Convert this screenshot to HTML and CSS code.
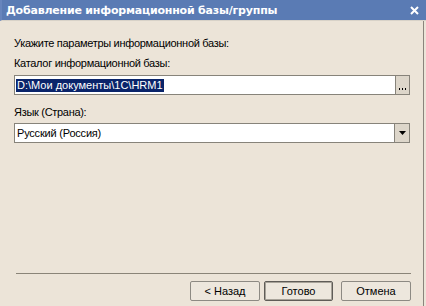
FILE: index.html
```html
<!DOCTYPE html>
<html lang="ru">
<head>
    <meta charset="UTF-8">
    <title>Добавление информационной базы/группы</title>
    <link rel="stylesheet" href="styles.css">
</head>
<body>
<div class="window">
    <div class="titlebar">
        <span class="title">Добавление информационной базы/группы</span>
        <svg class="close" width="9" height="9" viewBox="0 0 9 9">
            <path d="M1 1 L8 8 M8 1 L1 8" stroke="#fff" stroke-width="2" fill="none"/>
        </svg>
    </div>

    <div class="content">
        <div class="label first">Укажите параметры информационной базы:</div>

        <div class="label">Каталог информационной базы:</div>
        <div class="field path-field">
            <div class="field-value"><span class="selected">D:\Мои документы\1С\HRM1</span></div>
            <div class="field-btn">
                <svg width="7" height="2" viewBox="0 0 7 2">
                    <rect x="0" y="0" width="1" height="2" fill="#000"/>
                    <rect x="3" y="0" width="1" height="2" fill="#000"/>
                    <rect x="6" y="0" width="1" height="2" fill="#000"/>
                </svg>
            </div>
        </div>

        <div class="label lang-label">Язык (Страна):</div>
        <div class="field select-field">
            <div class="field-value">Русский (Россия)</div>
            <div class="field-btn">
                <svg width="7" height="4" viewBox="0 0 7 4">
                    <path d="M0 0 H7 L3.5 4 Z" fill="#000"/>
                </svg>
            </div>
        </div>

        <div class="spacer"></div>

        <div class="separator"></div>

        <div class="buttons">
            <div class="button">&lt; Назад</div>
            <div class="button default">Готово</div>
            <div class="button cancel">Отмена</div>
        </div>
    </div>
</div>
</body>
</html>
```

FILE: styles.css
```css
body {
    margin: 0;
    padding: 0;
    font-family: 'Liberation Sans', Arial, sans-serif;
    font-size: 11px;
    color: #000;
    background: #ece4d8;
}

.window {
    width: 426px;
    height: 306px;
    display: flex;
    flex-direction: column;
    background: #ece4d8;
    box-sizing: border-box;
    overflow: hidden;
}

.titlebar {
    height: 20px;
    flex: none;
    display: flex;
    align-items: center;
    justify-content: space-between;
    padding: 0 6px 0 6px;
    background: #5a7bb4;
    border-left: 2px solid #6785bd;
    border-bottom: 1px solid #d8d2c8;
    box-sizing: content-box;
}

.title {
    color: #fff;
    font-family: 'DejaVu Sans', Verdana, sans-serif;
    font-weight: bold;
    font-size: 11px;
    letter-spacing: -0.2px;
    margin-left: -2px;
}

.close {
    margin-right: 1px;
}

.content {
    flex: 1;
    display: flex;
    flex-direction: column;
    padding: 0 13px 5px 14px;
    border-right: 1px solid #8a857c;
    margin-right: 2px;
}

.label {
    line-height: 13px;
    margin-top: 7px;
    letter-spacing: -0.3px;
}

.label.first {
    margin-top: 16px;
}

.field {
    display: flex;
    height: 20px;
    margin-top: 5px;
    border: 1px solid #87837a;
    background: #fff;
    box-sizing: border-box;
}

.field-value {
    flex: 1;
    display: flex;
    align-items: center;
    padding-left: 1px;
    line-height: 13px;
}

.select-field .field-value {
    padding-left: 2px;
    letter-spacing: -0.2px;
}

.selected {
    background: #0a246a;
    color: #fff;
    padding: 0 1px;
}

.field-btn {
    width: 14px;
    flex: none;
    display: flex;
    align-items: center;
    justify-content: center;
    background: #ddd6ca;
    border-left: 1px solid #87837a;
}

.path-field .field-btn {
    align-items: flex-end;
    padding-bottom: 4px;
    box-sizing: border-box;
}

.label.lang-label {
    margin-top: 11px;
}

.select-field {
    margin-top: 4px;
}

.spacer {
    flex: 1;
}

.separator {
    height: 1px;
    background: #8a8478;
    margin-left: 2px;
    margin-right: -1px;
}

.buttons {
    display: flex;
    justify-content: flex-end;
    margin-top: 7px;
    margin-right: -1px;
}

.button {
    width: 70px;
    height: 20px;
    box-sizing: border-box;
    display: flex;
    align-items: center;
    justify-content: center;
    border: 1px solid #8d8a83;
    border-radius: 2px;
    background: #ede7dd;
    margin-left: 4px;
}

.button.default {
    border-color: #5f5c57;
    box-shadow: inset 0 0 0 1px #a8a399;
    width: 69px;
}

.button.cancel {
    margin-left: 8px;
}
```
